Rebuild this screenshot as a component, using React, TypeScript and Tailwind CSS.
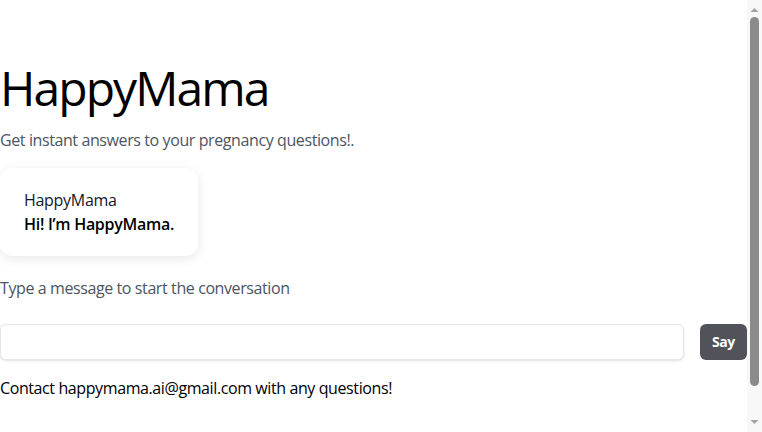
function FakeScrollbar() {
  // browser scrollbar seen in the screenshot
  return (
    <div className="fixed top-0 right-0 bottom-0 flex w-[15px] flex-col items-center bg-[#f8f8f8]">
      <svg width="15" height="17" viewBox="0 0 15 17" className="shrink-0">
        <path d="M3.5 12 L7.5 8 L11.5 12 Z" fill="#a3a3a3" />
      </svg>
      <div className="h-[369px] w-[9px] rounded-full bg-[#8b8b8b]" />
      <div className="flex-1" />
      <svg width="15" height="17" viewBox="0 0 15 17" className="shrink-0">
        <path d="M3.5 5 L7.5 9 L11.5 5 Z" fill="#a3a3a3" />
      </svg>
    </div>
  );
}

export default function App() {
  return (
    <div className="min-h-screen bg-white font-['Open_Sans',sans-serif] text-black">
      <main className="mr-[15px] pt-16 pb-16">
        <h1 className="text-5xl leading-none font-normal tracking-[-0.04em]">HappyMama</h1>
        <p className="mt-4 text-base tracking-tight text-[#4b5563]">
          Get instant answers to your pregnancy questions!.
        </p>

        {/* Chat bubble */}
        <div className="mt-4 w-fit rounded-xl bg-white px-6 py-5 tracking-[-0.018em] shadow-[0_3px_12px_rgba(0,0,0,0.09)]">
          <div className="text-base text-[#111827]">HappyMama</div>
          <div className="text-base font-semibold">Hi! I’m HappyMama.</div>
        </div>

        <p className="mt-5 text-base tracking-tight text-[#4b5563]">
          Type a message to start the conversation
        </p>

        <div className="mt-6 flex items-center gap-4">
          <input
            type="text"
            className="h-9 flex-1 rounded-md border border-gray-200 bg-white px-3 text-sm shadow-sm outline-none"
          />
          <button className="h-9 rounded-md bg-[#52525b] px-3 text-sm font-bold tracking-tight text-white">
            Say
          </button>
        </div>

        <p className="mt-4 text-base tracking-tight">
          Contact happymama.ai@gmail.com with any questions!
        </p>
      </main>
      <FakeScrollbar />
    </div>
  );
}
